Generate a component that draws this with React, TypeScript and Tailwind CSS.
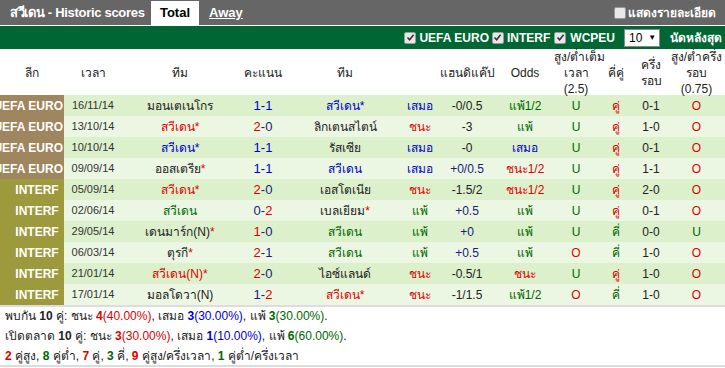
import React from "react";

type Seg = { t: string; c: string };
type Row = {
  league: "UEFA EURO" | "INTERF";
  date: string;
  home: Seg[];
  score: Seg[];
  away: Seg[];
  res: Seg;
  hdp: Seg;
  odds: Seg;
  ou: Seg;
  oe: Seg;
  half: string;
  hou: Seg;
};

const R = "#dd0000";
const B = "#0000cc";
const G = "#006600";
const K = "#222222";
const N = "#1a1a80";

const s = (t: string, c: string): Seg => ({ t, c });

const rows: Row[] = [
  { league: "UEFA EURO", date: "16/11/14", home: [s("มอนเตเนโกร", K)], score: [s("1-1", B)], away: [s("สวีเดน*", B)], res: s("เสมอ", B), hdp: s("-0/0.5", K), odds: s("แพ้1/2", G), ou: s("U", G), oe: s("คู่", R), half: "0-1", hou: s("O", R) },
  { league: "UEFA EURO", date: "13/10/14", home: [s("สวีเดน*", R)], score: [s("2", R), s("-0", N)], away: [s("ลิกเตนสไตน์", K)], res: s("ชนะ", R), hdp: s("-3", K), odds: s("แพ้", G), ou: s("U", G), oe: s("คู่", R), half: "1-0", hou: s("O", R) },
  { league: "UEFA EURO", date: "10/10/14", home: [s("สวีเดน*", B)], score: [s("1-1", B)], away: [s("รัสเซีย", K)], res: s("เสมอ", B), hdp: s("-0", K), odds: s("เสมอ", B), ou: s("U", G), oe: s("คู่", R), half: "0-1", hou: s("O", R) },
  { league: "UEFA EURO", date: "09/09/14", home: [s("ออสเตรีย", K), s("*", R)], score: [s("1-1", B)], away: [s("สวีเดน", B)], res: s("เสมอ", B), hdp: s("+0/0.5", N), odds: s("ชนะ1/2", R), ou: s("U", G), oe: s("คู่", R), half: "1-1", hou: s("O", R) },
  { league: "INTERF", date: "05/09/14", home: [s("สวีเดน*", R)], score: [s("2", R), s("-0", N)], away: [s("เอสโตเนีย", K)], res: s("ชนะ", R), hdp: s("-1.5/2", K), odds: s("ชนะ1/2", R), ou: s("U", G), oe: s("คู่", R), half: "2-0", hou: s("O", R) },
  { league: "INTERF", date: "02/06/14", home: [s("สวีเดน", G)], score: [s("0-", N), s("2", R)], away: [s("เบลเยียม", K), s("*", R)], res: s("แพ้", G), hdp: s("+0.5", N), odds: s("แพ้", G), ou: s("U", G), oe: s("คู่", R), half: "0-1", hou: s("O", R) },
  { league: "INTERF", date: "29/05/14", home: [s("เดนมาร์ก(N)", K), s("*", R)], score: [s("1", R), s("-0", N)], away: [s("สวีเดน", G)], res: s("แพ้", G), hdp: s("+0", N), odds: s("แพ้", G), ou: s("U", G), oe: s("คี่", G), half: "0-0", hou: s("U", G) },
  { league: "INTERF", date: "06/03/14", home: [s("ตุรกี", K), s("*", R)], score: [s("2", R), s("-1", N)], away: [s("สวีเดน", G)], res: s("แพ้", G), hdp: s("+0.5", N), odds: s("แพ้", G), ou: s("O", R), oe: s("คี่", G), half: "1-0", hou: s("O", R) },
  { league: "INTERF", date: "21/01/14", home: [s("สวีเดน(N)*", R)], score: [s("2", R), s("-0", N)], away: [s("ไอซ์แลนด์", K)], res: s("ชนะ", R), hdp: s("-0.5/1", K), odds: s("ชนะ", R), ou: s("U", G), oe: s("คู่", R), half: "1-0", hou: s("O", R) },
  { league: "INTERF", date: "17/01/14", home: [s("มอลโดวา(N)", K)], score: [s("1-", N), s("2", R)], away: [s("สวีเดน*", R)], res: s("ชนะ", R), hdp: s("-1/1.5", K), odds: s("แพ้1/2", G), ou: s("O", R), oe: s("คี่", G), half: "1-0", hou: s("O", R) },
];

const cols = "grid grid-cols-[64px_58px_116px_50px_114px_36px_58px_58px_44px_36px_34px_57px]";

function Segs({ segs }: { segs: Seg[] }) {
  return (
    <>
      {segs.map((x, i) => (
        <span key={i} style={{ color: x.c }}>
          {x.t}
        </span>
      ))}
    </>
  );
}

function Check() {
  return (
    <span className="inline-flex items-center justify-center w-[12px] h-[12px] bg-[#e8e8e8] border border-[#9a9a9a] rounded-[2px] mr-[3px]">
      <svg width="9" height="9" viewBox="0 0 9 9">
        <path d="M1.5 4.5 L3.6 6.8 L7.6 1.8" stroke="#333" strokeWidth="1.6" fill="none" />
      </svg>
    </span>
  );
}

const font = { fontFamily: '"Liberation Sans", Tahoma, "Noto Sans", sans-serif' };

export default function App() {
  return (
    <div className="w-[725px] h-[368px] bg-white overflow-hidden text-[12px] text-[#222]" style={font}>
      {/* top bar */}
      <div className="flex items-end h-[25px] bg-[#666666]">
        <div className="w-[151px] shrink-0 pl-[10px] h-full flex items-center text-white font-bold text-[13px] whitespace-nowrap tracking-[-0.3px]">สวีเดน - Historic scores</div>
        <div className="h-[24px] w-[48px] bg-white flex items-center justify-center font-bold text-[13px] text-black">Total</div>
        <div className="h-full flex items-center pl-[10px] text-white font-bold text-[13px] underline">Away</div>
        <div className="ml-auto h-full flex items-center pr-[9px] text-white font-bold text-[12px]">
          <span className="inline-block w-[12px] h-[12px] bg-[#e8e8e8] border border-[#9a9a9a] rounded-[2px] mr-[2px]" />
          แสดงรายละเอียด
        </div>
      </div>
      <div className="h-[1px] bg-white" />
      {/* green bar */}
      <div className="h-[23px] bg-[#006633] flex items-center justify-end pr-[3px] text-white font-bold text-[12px]">
        <Check />
        <span className="mr-[3px]">UEFA EURO</span>
        <Check />
        <span className="mr-[4px]">INTERF</span>
        <Check />
        <span className="ml-[1px]">WCPEU</span>
        <div className="ml-[9px] w-[36px] h-[18px] bg-white border border-[#888] flex items-center pl-[4px] text-black font-normal text-[12px]">
          10
          <span className="ml-[6px] text-[8px]">▼</span>
        </div>
        <span className="ml-[10px]">นัดหลังสุด</span>
      </div>
      {/* header */}
      <div className={`${cols} h-[46px] items-center text-center text-[12px] text-[#222] leading-[16px]`}>
        <div>ลีก</div>
        <div>เวลา</div>
        <div>ทีม</div>
        <div>คะแนน</div>
        <div>ทีม</div>
        <div />
        <div className="whitespace-nowrap">แฮนดิแค๊ป</div>
        <div>Odds</div>
        <div className="whitespace-nowrap">สูง/ต่ำเต็ม<br />เวลา<br />(2.5)</div>
        <div>คี่คู่</div>
        <div>ครึ่ง<br />รอบ</div>
        <div className="whitespace-nowrap">สูง/ต่ำครึ่ง<br />รอบ<br />(0.75)</div>
      </div>
      {/* rows */}
      {rows.map((r, i) => (
        <div key={i} className={`${cols} h-[21px] items-center text-center ${i % 2 === 0 ? "bg-[#dcf0cb]" : "bg-[#ecf7e3]"}`}>
          {r.league === "INTERF" ? (
            <div className="h-full flex items-center justify-center pl-[10px] whitespace-nowrap text-white font-bold text-[12px] bg-[#9c9a3c]">
              {r.league}
            </div>
          ) : (
            <div className="h-full flex items-center justify-end pr-[1px] whitespace-nowrap text-white font-bold text-[12px] bg-[#a0865f]">
              {r.league}
            </div>
          )}
          <div className="text-[11px] text-[#333]">{r.date}</div>
          <div className="whitespace-nowrap"><Segs segs={r.home} /></div>
          <div className="text-[13px]"><Segs segs={r.score} /></div>
          <div className="whitespace-nowrap"><Segs segs={r.away} /></div>
          <div style={{ color: r.res.c }}>{r.res.t}</div>
          <div style={{ color: r.hdp.c }}>{r.hdp.t}</div>
          <div style={{ color: r.odds.c }}>{r.odds.t}</div>
          <div style={{ color: r.ou.c }}>{r.ou.t}</div>
          <div style={{ color: r.oe.c }}>{r.oe.t}</div>
          <div className="text-[#222]">{r.half}</div>
          <div style={{ color: r.hou.c }}>{r.hou.t}</div>
        </div>
      ))}
      {/* footer */}
      <div className="border-t-2 border-b-2 border-[#dddddd] h-[62px] pl-[5px] text-[12px] leading-[20px] text-[#222]">
        <div className="-mt-[1px]">
          พบกัน <b>10</b> คู่: ชนะ <b className="text-[#dd0000]">4</b><span className="text-[#dd0000]">(40.00%)</span>, เสมอ <b className="text-[#0000cc]">3</b><span className="text-[#0000cc]">(30.00%)</span>, แพ้ <b className="text-[#006600]">3</b><span className="text-[#006600]">(30.00%)</span>.
        </div>
        <div>
          เปิดตลาด <b>10</b> คู่: ชนะ <b className="text-[#dd0000]">3</b><span className="text-[#dd0000]">(30.00%)</span>, เสมอ <b className="text-[#0000cc]">1</b><span className="text-[#0000cc]">(10.00%)</span>, แพ้ <b className="text-[#006600]">6</b><span className="text-[#006600]">(60.00%)</span>.
        </div>
        <div>
          <b className="text-[#dd0000]">2</b> คู่สูง, <b className="text-[#006600]">8</b> คู่ต่ำ, <b className="text-[#dd0000]">7</b> คู่, <b className="text-[#006600]">3</b> คี่, <b className="text-[#dd0000]">9</b> คู่สูง/ครึ่งเวลา, <b className="text-[#006600]">1</b> คู่ต่ำ/ครึ่งเวลา
        </div>
      </div>
    </div>
  );
}
